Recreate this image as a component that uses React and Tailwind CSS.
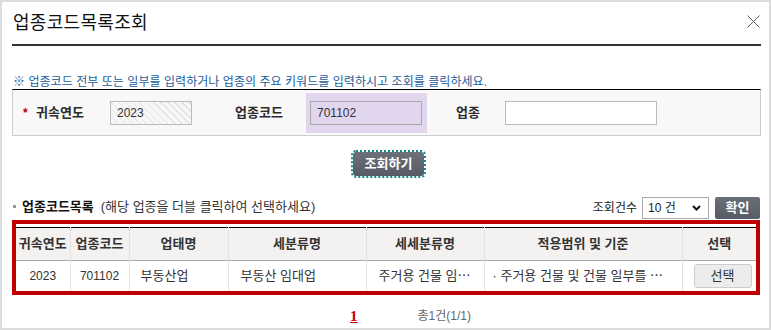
import React from "react";

const cols = [
  { label: "귀속연도", w: "w-[54px]" },
  { label: "업종코드", w: "w-[59px]" },
  { label: "업태명", w: "w-[99px]" },
  { label: "세분류명", w: "w-[138px]" },
  { label: "세세분류명", w: "w-[118px]" },
  { label: "적용범위 및 기준", w: "w-[198px]" },
  { label: "선택", w: "w-[74px]" },
];

export default function App() {
  return (
    <div className="w-[771px] h-[330px] border-2 border-[#dcdcdc] bg-white pl-[10px] pr-[8px] font-['Liberation_Sans','Noto_Sans_CJK_KR',sans-serif] text-[#333] overflow-hidden">
      {/* 제목 */}
      <div className="h-[42px] flex items-center justify-between border-b-2 border-[#333] box-content">
        <h1 className="text-[18px] leading-[20px] text-[#111] pl-[1px] tracking-[0.3px]">업종코드목록조회</h1>
        <button className="mr-[1px] -mt-[4px]">
          <svg width="13" height="13" viewBox="0 0 13 13">
            <path d="M0.5 0.5 L12.5 12.5 M12.5 0.5 L0.5 12.5" stroke="#5a5f6e" strokeWidth="1" fill="none" />
          </svg>
        </button>
      </div>

      {/* 안내문 */}
      <p className="mt-[29px] text-[12px] leading-[14px] text-[#1b5c9a] pl-[1px] whitespace-nowrap tracking-[0.05px]">
        ※ 업종코드 전부 또는 일부를 입력하거나 업종의 주요 키워드를 입력하시고 조회를 클릭하세요.
      </p>

      {/* 검색 영역 */}
      <div className="h-[47px] border border-[#cccccc] border-t-black bg-[#f8f8f8] flex items-center">
        <span className="ml-[10px] w-[13px] text-[#c00000] text-[12px] font-bold leading-none">*</span>
        <span className="w-[74px] text-[13px] font-bold text-[#2b2b2b]">귀속연도</span>
        <div className="w-[82px] h-[24px] border border-[#bbbbbb] flex items-center pl-[6px] text-[12px] text-[#333] bg-[repeating-linear-gradient(45deg,#e2e2e2_0px,#e2e2e2_1px,#f7f7f7_1px,#f7f7f7_5px)]">
          2023
        </div>
        <span className="ml-[43px] w-[71px] text-[13px] font-bold text-[#2b2b2b]">업종코드</span>
        <div className="w-[121px] h-[40px] bg-[#e2d5ee] flex items-center pl-[4px]">
          <div className="w-[112px] h-[24px] border border-[#aaaaaa] flex items-center pl-[6px] text-[12px] text-[#333]">
            701102
          </div>
        </div>
        <span className="ml-[29px] w-[49px] text-[13px] font-bold text-[#2b2b2b]">업종</span>
        <div className="w-[152px] h-[24px] border border-[#bbbbbb] bg-white"></div>
      </div>

      {/* 조회 버튼 */}
      <div className="mt-[15px] pl-[341px]">
        <button className="w-[71px] h-[24px] rounded-[3px] bg-gradient-to-b from-[#6c717b] to-[#555a64] text-white text-[13px] font-bold leading-none outline-2 outline-dotted outline-[#138b8b]">
          조회하기
        </button>
      </div>

      {/* 목록 헤더 */}
      <div className="mt-[21px] h-[22px] flex items-center justify-between pr-[1px]">
        <div className="flex items-center -mt-[2px]">
          <span className="w-[3px] h-[3px] bg-[#999] ml-[1px]"></span>
          <span className="ml-[6px] text-[13px] font-bold text-[#111]">업종코드목록</span>
          <span className="ml-[7px] text-[13px] text-[#333]">(해당 업종을 더블 클릭하여 선택하세요)</span>
        </div>
        <div className="flex items-center">
          <span className="text-[12px] text-[#222]">조회건수</span>
          <div className="ml-[5px] w-[67px] h-[22px] border border-[#aaaaaa] bg-white flex items-center justify-between pl-[5px] pr-[7px] text-[12px] text-[#222]">
            <span>10 건</span>
            <svg width="9" height="6" viewBox="0 0 9 6">
              <polyline points="1,1 4.5,4.5 8,1" stroke="#111" strokeWidth="2" fill="none" />
            </svg>
          </div>
          <button className="ml-[6px] w-[45px] h-[22px] rounded-[2px] bg-gradient-to-b from-[#6a6f79] to-[#565b65] text-white text-[13px] font-bold leading-none">
            확인
          </button>
        </div>
      </div>

      {/* 결과 테이블 */}
      <div className="mt-[1px] w-[748px] border-4 border-[#c00000] pt-[3px]">
        <table className="w-[740px] table-fixed border-collapse">
          <thead>
            <tr className="h-[33px] bg-[#f3f2f0] border-t border-t-black border-b border-b-[#aaaaaa]">
              {cols.map((c, i) => (
                <th
                  key={c.label}
                  className={`${c.w} p-0 text-[13px] font-bold text-[#333] text-center whitespace-nowrap ${i < cols.length - 1 ? "border-r border-r-[#e2e2e2]" : ""}`}
                >
                  {c.label}
                </th>
              ))}
            </tr>
          </thead>
          <tbody>
            <tr className="h-[31px] text-[13px] text-[#333]">
              <td className="p-0 text-center text-[12px] border-r border-r-[#e2e2e2]">2023</td>
              <td className="p-0 text-center text-[12px] border-r border-r-[#e2e2e2]">701102</td>
              <td className="p-0 pl-[11px] border-r border-r-[#e2e2e2] whitespace-nowrap">부동산업</td>
              <td className="p-0 pl-[12px] border-r border-r-[#e2e2e2] whitespace-nowrap">부동산 임대업</td>
              <td className="p-0 pl-[12px] border-r border-r-[#e2e2e2] whitespace-nowrap">주거용 건물 임⋯</td>
              <td className="p-0 pl-[8px] border-r border-r-[#e2e2e2] whitespace-nowrap">· 주거용 건물 및 건물 일부를 ⋯</td>
              <td className="p-0 pl-[11px]">
                <button className="w-[58px] h-[24px] rounded-[3px] border border-[#cccccc] bg-[#ececec] text-[13px] text-[#333] leading-none">
                  선택
                </button>
              </td>
            </tr>
          </tbody>
        </table>
      </div>

      {/* 페이지 */}
      <div className="mt-[11px] h-[20px] flex items-center pl-[338px]">
        <span className="text-[15px] font-bold text-[#cc0000] underline font-['Liberation_Serif',serif]">1</span>
        <span className="ml-[60px] text-[12px] text-[#666]">총1건(1/1)</span>
      </div>
    </div>
  );
}
